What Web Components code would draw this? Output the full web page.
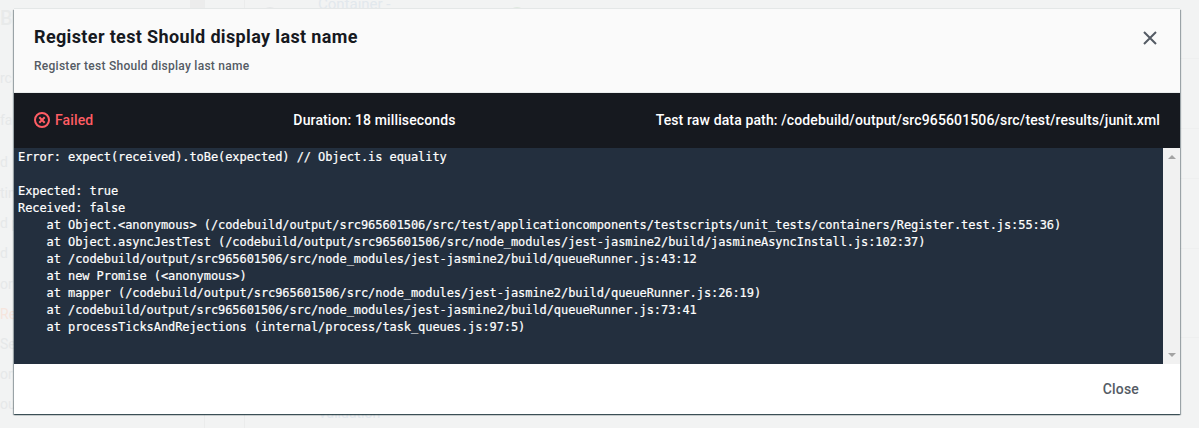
<!DOCTYPE html>
<html>
<head>
<meta charset="utf-8">
<style>
  html, body { margin: 0; height: 100%; overflow: hidden; background: #f2f3f3; }
  body { font-family: Roboto, "Noto Sans", sans-serif; }
</style>
</head>
<body>
<test-page>
  <nav-behind slot="behind"></nav-behind>
  <test-modal heading="Register test Should display last name">
    <status-bar slot="status"
      duration="Duration: 18 milliseconds"
      path="Test raw data path: /codebuild/output/src965601506/src/test/results/junit.xml"></status-bar>
    <log-view>Error: expect(received).toBe(expected) // Object.is equality

Expected: true
Received: false
    at Object.&lt;anonymous&gt; (/codebuild/output/src965601506/src/test/applicationcomponents/testscripts/unit_tests/containers/Register.test.js:55:36)
    at Object.asyncJestTest (/codebuild/output/src965601506/src/node_modules/jest-jasmine2/build/jasmineAsyncInstall.js:102:37)
    at /codebuild/output/src965601506/src/node_modules/jest-jasmine2/build/queueRunner.js:43:12
    at new Promise (&lt;anonymous&gt;)
    at mapper (/codebuild/output/src965601506/src/node_modules/jest-jasmine2/build/queueRunner.js:26:19)
    at /codebuild/output/src965601506/src/node_modules/jest-jasmine2/build/queueRunner.js:73:41
    at processTicksAndRejections (internal/process/task_queues.js:97:5)</log-view>
  </test-modal>
</test-page>
<script>
class TestPage extends HTMLElement {
  constructor() {
    super();
    this.attachShadow({ mode: "open" });
    this.shadowRoot.innerHTML = `
      <style>
        :host { display: block; position: relative; height: 428px; overflow: hidden; }
        .over { position: absolute; left: 14px; top: 9px; width: 1166px; }
      </style>
      <slot name="behind"></slot>
      <div class="over"><slot></slot></div>
    `;
  }
}

// the greyed out page that shows round the dialog
class NavBehind extends HTMLElement {
  constructor() {
    super();
    this.attachShadow({ mode: "open" });
    const side = ["rc", "fa", "d", "tin", "d p", "d", "or", "Rep", "Set", "or", "our"];
    const gaps = [0, 12, 12, 1, 0, 0, 1, 0, 0, 0, 0];
    this.shadowRoot.innerHTML = `
      <style>
        :host { display: flex; height: 428px; color: #e6e8e9; font-size: 14px; line-height: 30px; overflow: hidden; }
        .side { flex: none; width: 190px; display: flex; flex-direction: column; }
        .side b { font-size: 20px; font-weight: 500; line-height: 24px; margin: 6px 0 33px; color: #e8eaea; }
        .side span { white-space: nowrap; }
        .side .hot { color: #f6e5dd; }
        .chip { flex: none; width: 14px; height: 9px; background: #ececec; }
        .cols { flex: none; width: 39px; border-left: 1px solid #ebecec; border-right: 1px solid #ebecec; }
        .dot { flex: none; width: 16px; height: 16px; margin: 7px 0 0 17px; border-radius: 50%; background: #e6e8e9; }
        .dot.ok { margin-left: 71px; background: #dfe9e0; }
        .main { flex: none; width: 120px; margin-left: 40px; display: flex; flex-direction: column; justify-content: space-between; color: #e2e8ed; }
        .main div { line-height: 18px; }
        .top { margin-top: -5px; font-size: 15px; }
        .bottom { margin-bottom: 6px; }
        .rows { flex: 1; display: flex; justify-content: flex-end; }
        .rows i { width: 19px; height: 280px; margin-top: 58px;
          background: linear-gradient(#eeefef, #eeefef) 0 0/100% 1px no-repeat,
            linear-gradient(#eeefef, #eeefef) 0 70px/100% 1px no-repeat,
            linear-gradient(#eeefef, #eeefef) 0 120px/100% 1px no-repeat,
            linear-gradient(#eeefef, #eeefef) 0 190px/100% 1px no-repeat,
            linear-gradient(#eeefef, #eeefef) 0 279px/100% 1px no-repeat; }
      </style>
      <div class="side">
        <b>Bu</b>
        ${side.map((s, i) => `<span class="${i == 7 ? "hot" : ""}" style="margin-top:${gaps[i]}px">${s}</span>`).join("")}
      </div>
      <div class="chip"></div>
      <div class="cols"></div>
      <div class="dot"></div>
      <div class="main"><div class="top">Container -</div><div class="bottom">Validation</div></div>
      <div class="dot ok"></div>
      <div class="rows"><i></i></div>
    `;
  }
}

class TestModal extends HTMLElement {
  constructor() {
    super();
    this.attachShadow({ mode: "open" });
  }
  connectedCallback() {
    this.shadowRoot.innerHTML = `
      <style>
        :host {
          display: flex; flex-direction: column; height: 405px; background: #fff;
          box-shadow: 0 -1px 0 0 #e4e7e7, 0 1px 1px 0 rgba(0,28,36,.5), 1px 1px 1px 0 rgba(0,28,36,.3), -1px 1px 1px 0 rgba(0,28,36,.3);
        }
        header {
          height: 84px; box-sizing: border-box; flex: none; background: #fafafa;
          border-bottom: 1px solid #eaeded; padding: 16px 20px 0; position: relative;
        }
        h1 { margin: 0; font-size: 18px; line-height: 24px; font-weight: 700; letter-spacing: .36px; color: #16191f; }
        p { margin: 9px 0 0; font-size: 12px; line-height: 16px; font-weight: 500; letter-spacing: .27px; color: #545b64; }
        button.x {
          position: absolute; right: 19px; top: 18px; width: 22px; height: 22px;
          padding: 0; border: 0; background: none; display: flex;
        }
        footer { flex: 1; display: flex; align-items: center; justify-content: flex-end; padding-right: 41px; }
        footer span { font-size: 14px; font-weight: 500; letter-spacing: .2px; color: #545b64; }
      </style>
      <header>
        <h1>${this.getAttribute("heading")}</h1>
        <p>${this.getAttribute("heading")}</p>
        <button class="x"><svg width="22" height="22" viewBox="0 0 22 22"><path d="M5 5l12 12M17 5L5 17" stroke="#545b64" stroke-width="2" fill="none"/></svg></button>
      </header>
      <slot name="status"></slot>
      <slot></slot>
      <footer><span>Close</span></footer>
    `;
  }
}

class StatusBar extends HTMLElement {
  constructor() {
    super();
    this.attachShadow({ mode: "open" });
  }
  connectedCallback() {
    this.shadowRoot.innerHTML = `
      <style>
        :host {
          display: flex; flex: none; height: 55px; background: #16191f; color: #fff;
          align-items: center; justify-content: space-between; padding: 0 20px 1px;
          font-size: 14px; font-weight: 500; letter-spacing: .13px; box-sizing: border-box;
        }
        .failed { display: flex; align-items: center; gap: 5px; color: #ff5d64; }
        svg { display: block; }
      </style>
      <div class="failed">
        <svg width="16" height="16" viewBox="0 0 16 16" fill="none" stroke="#ff5d64" stroke-width="2"><circle cx="8" cy="8" r="7"/><path d="M5.3 5.3l5.4 5.4M10.7 5.3l-5.4 5.4"/></svg>
        <span>Failed</span>
      </div>
      <div>${this.getAttribute("duration")}</div>
      <div>${this.getAttribute("path")}</div>
    `;
  }
}

class LogView extends HTMLElement {
  constructor() {
    super();
    this.attachShadow({ mode: "open" });
    this.shadowRoot.innerHTML = `
      <style>
        :host { display: flex; flex: none; height: 216px; background: #232f3e; }
        pre {
          flex: 1; margin: 0; padding: 1px 4px; overflow: hidden; color: #fff;
          font: 12px/17px "DejaVu Sans Mono", monospace; letter-spacing: -0.08px;
          -webkit-text-stroke: 0.2px #fff;
        }
        .bar { flex: none; width: 17px; background: #f1f1f1; display: flex; flex-direction: column; justify-content: space-between; align-items: center; padding: 7px 0; box-sizing: border-box; }
        .bar i { width: 0; height: 0; border: 4px solid transparent; }
        .up { border-bottom-color: #a3a3a3 !important; border-top-width: 0 !important; }
        .down { border-top-color: #a3a3a3 !important; border-bottom-width: 0 !important; }
      </style>
      <pre><slot></slot></pre>
      <div class="bar"><i class="up"></i><i class="down"></i></div>
    `;
  }
}

customElements.define("test-page", TestPage);
customElements.define("nav-behind", NavBehind);
customElements.define("test-modal", TestModal);
customElements.define("status-bar", StatusBar);
customElements.define("log-view", LogView);
</script>
</body>
</html>
